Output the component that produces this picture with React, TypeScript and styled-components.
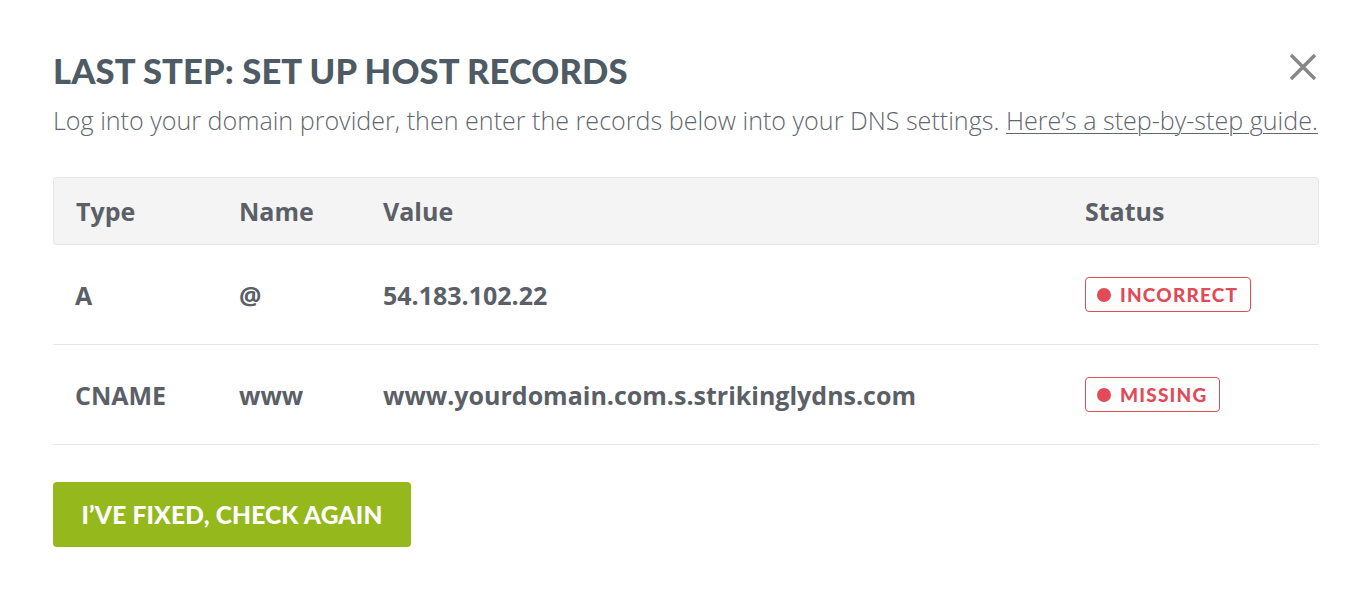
import React from 'react';
import styled, { createGlobalStyle } from 'styled-components';

const GlobalStyle = createGlobalStyle`
  html, body {
    margin: 0;
    padding: 0;
    background: #ffffff;
  }
  body {
    font-family: "Open Sans", "Liberation Sans", sans-serif;
    color: #5b6068;
  }
`;

const Modal = styled.div`
  width: 1370px;
  height: 614px;
  box-sizing: border-box;
  padding: 50px 51px 0 53px;
  background: #fff;
`;

const Header = styled.div`
  display: flex;
  justify-content: space-between;
  align-items: flex-start;
`;

const Title = styled.h1`
  margin: 0;
  font-family: "Lato", "Liberation Sans", sans-serif;
  font-weight: 900;
  font-size: 34.6px;
  line-height: 42px;
  color: #4e5b65;
  letter-spacing: 0.1px;
`;

const CloseButton = styled.button`
  border: 0;
  background: none;
  padding: 0;
  margin: 2px 1px 0 0;
  width: 30px;
  height: 30px;
  cursor: pointer;
`;

const Intro = styled.p`
  margin: 12px 0 0;
  font-size: 25.1px;
  line-height: 32px;
  font-weight: 300;
  color: #5f6770;
`;

const GuideLink = styled.a`
  color: #5f6770;
  text-decoration: underline;
  text-decoration-thickness: 1px;
  text-underline-offset: 3px;
`;

const Table = styled.div`
  margin-top: 41px;
  display: grid;
  grid-template-columns: 186px 144px 702px 1fr;
`;

const HeadCell = styled.div<{ $first?: boolean; $last?: boolean }>`
  height: 68px;
  box-sizing: border-box;
  display: flex;
  align-items: center;
  padding-left: ${p => (p.$first ? '22px' : '0')};
  background: #f4f4f5;
  border-top: 1px solid #e5e6e7;
  border-bottom: 1px solid #e5e6e7;
  border-left: ${p => (p.$first ? '1px solid #e5e6e7' : '0')};
  border-right: ${p => (p.$last ? '1px solid #e5e6e7' : '0')};
  border-radius: ${p => (p.$first ? '4px 0 0 4px' : p.$last ? '0 4px 4px 0' : '0')};
  font-weight: 700;
  font-size: 25px;
  color: #5b6068;
`;

const Cell = styled.div<{ $first?: boolean }>`
  height: 100px;
  box-sizing: border-box;
  display: flex;
  align-items: center;
  padding-left: ${p => (p.$first ? '22px' : '0')};
  border-bottom: 1px solid #e6e7e8;
  font-weight: 700;
  font-size: 25px;
  color: #5b6068;
`;

const Badge = styled.span`
  display: inline-flex;
  align-items: center;
  gap: 9px;
  height: 35px;
  box-sizing: border-box;
  padding: 0 12px 0 11px;
  border: 1px solid #e04b57;
  border-radius: 4px;
  font-family: "Lato", "Liberation Sans", sans-serif;
  font-weight: 900;
  font-size: 19px;
  letter-spacing: 1.2px;
  color: #e04b57;
`;

const Dot = styled.span`
  width: 14px;
  height: 14px;
  border-radius: 50%;
  background: #e04b57;
`;

const CheckButton = styled.button`
  margin-top: 37px;
  width: 358px;
  height: 65px;
  border: 0;
  border-radius: 4px;
  background: #95b81c;
  color: #fff;
  font-family: "Lato", "Liberation Sans", sans-serif;
  font-weight: 900;
  font-size: 24.5px;
  letter-spacing: 0.2px;
  cursor: pointer;
`;

const records = [
  { type: 'A', name: '@', value: '54.183.102.22', status: 'INCORRECT' },
  { type: 'CNAME', name: 'www', value: 'www.yourdomain.com.s.strikinglydns.com', status: 'MISSING' },
];

export default function App() {
  return (
    <>
      <GlobalStyle />
      <Modal>
        <Header>
          <Title>LAST STEP: SET UP HOST RECORDS</Title>
          <CloseButton aria-label="Close">
            <svg width="30" height="30" viewBox="0 0 30 30">
              <path d="M3 3 L27 27 M27 3 L3 27" stroke="#888888" strokeWidth="3.6" strokeLinecap="butt" />
            </svg>
          </CloseButton>
        </Header>
        <Intro>
          Log into your domain provider, then enter the records below into your DNS settings.{' '}
          <GuideLink href="#">Here’s a step-by-step guide.</GuideLink>
        </Intro>
        <Table>
          <HeadCell $first>Type</HeadCell>
          <HeadCell>Name</HeadCell>
          <HeadCell>Value</HeadCell>
          <HeadCell $last>Status</HeadCell>
          {records.map(r => (
            <React.Fragment key={r.type}>
              <Cell $first>{r.type}</Cell>
              <Cell>{r.name}</Cell>
              <Cell>{r.value}</Cell>
              <Cell>
                <Badge>
                  <Dot />
                  {r.status}
                </Badge>
              </Cell>
            </React.Fragment>
          ))}
        </Table>
        <CheckButton>I’VE FIXED, CHECK AGAIN</CheckButton>
      </Modal>
    </>
  );
}
